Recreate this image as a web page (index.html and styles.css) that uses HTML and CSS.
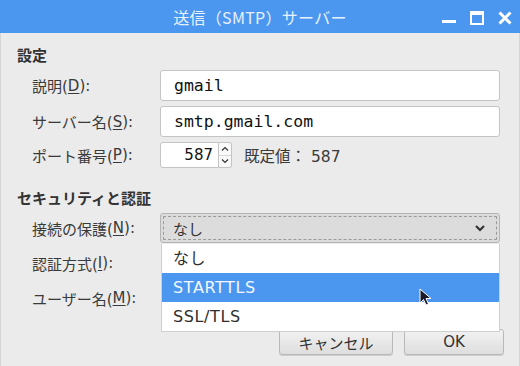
FILE: index.html
```html
<!DOCTYPE html>
<html>
<head>
    <meta charset="UTF-8">
    <title>送信（SMTP）サーバー</title>
    <link rel="stylesheet" href="styles.css">
</head>
<body>
    <div class="window">
        <div class="titlebar">
            <div></div>
            <div class="title">送信（SMTP）サーバー</div>
            <div class="wm-buttons">
                <svg width="14" height="14" viewBox="0 0 14 14"><rect x="0" y="9" width="14" height="3" fill="#fff"/></svg>
                <svg width="14" height="14" viewBox="0 0 14 14"><path d="M1 1.5H13V13H1Z" fill="none" stroke="#fff" stroke-width="2"/><rect x="0" y="0" width="14" height="4" fill="#fff"/></svg>
                <svg width="14" height="14" viewBox="0 0 14 14"><path d="M1.5 1.5L12.5 12.5M12.5 1.5L1.5 12.5" stroke="#fff" stroke-width="3"/></svg>
            </div>
        </div>

        <div class="content">
            <div class="heading">設定</div>
            <div class="form">
                <label class="lbl">説明(<u>D</u>):</label>
                <div class="entry">gmail</div>

                <label class="lbl">サーバー名(<u>S</u>):</label>
                <div class="entry">smtp.gmail.com</div>

                <label class="lbl">ポート番号(<u>P</u>):</label>
                <div class="port-row">
                    <div class="spin">
                        <div class="spin-value">587</div>
                        <div class="spin-btns">
                            <span class="spin-btn"><svg width="8" height="6" viewBox="0 0 8 6"><path d="M1 4.5L4 1.5L7 4.5" fill="none" stroke="#333" stroke-width="1.2"/></svg></span>
                            <span class="spin-btn"><svg width="8" height="6" viewBox="0 0 8 6"><path d="M1 1.5L4 4.5L7 1.5" fill="none" stroke="#333" stroke-width="1.2"/></svg></span>
                        </div>
                    </div>
                    <span class="default-val">既定値： 587</span>
                </div>
            </div>

            <div class="heading heading-2">セキュリティと認証</div>
            <div class="form form-2">
                <label class="lbl">接続の保護(<u>N</u>):</label>
                <div class="combo-wrap">
                    <div class="combo">
                        <div class="combo-focus">
                            <span>なし</span>
                            <svg width="12" height="8" viewBox="0 0 12 8"><path d="M2 2L6 6L10 2" fill="none" stroke="#333" stroke-width="2.2"/></svg>
                        </div>
                    </div>
                    <ul class="popup">
                        <li>なし</li>
                        <li class="selected">STARTTLS</li>
                        <li>SSL/TLS</li>
                    </ul>
                </div>

                <label class="lbl">認証方式(<u>I</u>):</label>
                <div></div>

                <label class="lbl">ユーザー名(<u>M</u>):</label>
                <div></div>
            </div>
        </div>

        <div class="actions">
            <button class="btn btn-cancel" type="button">キャンセル</button>
            <button class="btn btn-ok" type="button">OK</button>
        </div>

        <svg class="cursor" width="14" height="20" viewBox="0 0 14 20">
            <path d="M1 1L1 15L4.5 11.5L7 17L9.5 16L7 10.5L12 10.5Z" fill="#1a1a2a" stroke="#fff" stroke-width="1"/>
        </svg>
    </div>
</body>
</html>
```

FILE: styles.css
```css
html, body{
    margin: 0;
    padding: 0;
}
body{
    width: 520px;
    height: 366px;
    overflow: hidden;
    background: #ebebeb;
    font-family: "DejaVu Sans", "Noto Sans CJK JP", sans-serif;
    font-size: 15px;
    color: #3a3a3a;
}
.window{
    position: relative;
    height: 366px;
    border-left: 1px solid #d6d6d6;
    border-right: 1px solid #d6d6d6;
    box-sizing: border-box;
}
.titlebar{
    height: 33px;
    margin: 0 -1px;
    background: #4b97ef;
    display: grid;
    grid-template-columns: 1fr auto 1fr;
    align-items: center;
}
.title{
    color: #e9f1fc;
    font-family: "Noto Sans CJK JP", sans-serif;
    font-size: 16px;
    letter-spacing: 0.3px;
    padding-top: 1px;
}
.wm-buttons{
    display: flex;
    justify-content: flex-end;
    gap: 14px;
    padding-right: 8px;
    padding-top: 3px;
}

.content{
    padding: 11px 19px 0 16px;
}
.heading{
    height: 21px;
    line-height: 21px;
    font-weight: bold;
    color: #333;
    font-family: "Noto Sans CJK JP", sans-serif;
}
.heading-2{
    margin-top: 19px;
}
.form{
    display: grid;
    grid-template-columns: 128px 1fr;
    grid-template-rows: 31px 31px 26px;
    row-gap: 5px;
    margin: 5px 0 0 15px;
}
.form-2{
    grid-template-rows: 30px 30px 30px;
    margin-top: 5px;
}
.lbl{
    display: flex;
    align-items: center;
    white-space: nowrap;
}
.lbl u{
    text-underline-offset: 2px;
}
.entry{
    background: #fff;
    border: 1px solid #c4c4c4;
    border-radius: 3px;
    box-sizing: border-box;
    padding: 0 13px;
    display: flex;
    align-items: center;
    font-family: "DejaVu Sans Mono", monospace;
    font-size: 16.5px;
    color: #111;
}

.port-row{
    display: flex;
    align-items: center;
    gap: 12px;
}
.spin{
    display: flex;
    height: 26px;
}
.spin-value{
    width: 59px;
    box-sizing: border-box;
    background: #fff;
    border: 1px solid #c4c4c4;
    border-radius: 3px 0 0 3px;
    text-align: right;
    padding-right: 5px;
    line-height: 24px;
    color: #111;
}
.spin-btns{
    display: flex;
    flex-direction: column;
    width: 13px;
    border: 1px solid #c4c4c4;
    border-left: none;
    border-radius: 0 3px 3px 0;
    background: #fafafa;
    box-sizing: border-box;
}
.spin-btn{
    flex: 1;
    display: flex;
    align-items: center;
    justify-content: center;
}
.spin-btn + .spin-btn{
    border-top: 1px solid #d8d8d8;
}
.default-val{
    font-size: 15.5px;
}

.combo-wrap{
    position: relative;
}
.combo{
    height: 30px;
    box-sizing: border-box;
    border: 1px solid #b4b4b4;
    border-radius: 3px;
    background: #dcdcdc;
    padding: 2px;
}
.combo-focus{
    height: 100%;
    box-sizing: border-box;
    border: 1px dashed #9a9a9a;
    display: flex;
    align-items: center;
    justify-content: space-between;
    padding: 0 10px 0 9px;
    color: #333;
}
.popup{
    position: absolute;
    left: 1px;
    right: 0;
    top: 31px;
    margin: 0;
    padding: 0;
    list-style: none;
    background: #fff;
    border: 1px solid #cfcfcf;
    border-top: none;
}
.popup li{
    height: 29px;
    line-height: 29px;
    padding-left: 11px;
    font-size: 16px;
    letter-spacing: 0.6px;
    color: #2e2e2e;
}
.popup .selected{
    background: #4b97ef;
    color: #f4f8fe;
}

.actions{
    display: flex;
    justify-content: flex-end;
    gap: 11px;
    padding: 16px 15px 0 0;
}
.btn{
    height: 26px;
    box-sizing: border-box;
    border: 1px solid #b8b8b8;
    border-radius: 3px;
    background: linear-gradient(#f2f2f2, #dedede);
    box-shadow: 0 1px 0 rgba(0,0,0,0.12);
    font-family: "DejaVu Sans", "Noto Sans CJK JP", sans-serif;
    font-size: 15px;
    color: #333;
    padding: 0;
}
.btn-cancel{
    width: 114px;
}
.btn-ok{
    width: 100px;
}

.cursor{
    position: absolute;
    left: 418px;
    top: 288px;
}
```
